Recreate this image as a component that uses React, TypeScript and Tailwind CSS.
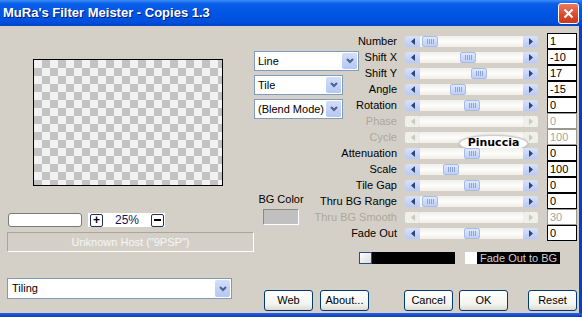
import React from "react";

type Row = { label: string; row: string; thumb?: number; value: string; disabled?: boolean };

const rows: Row[] = [
  { label: "Number", row: "row-start-1", thumb: 2, value: "1" },
  { label: "Shift X", row: "row-start-2", thumb: 40, value: "-10" },
  { label: "Shift Y", row: "row-start-3", thumb: 51, value: "17" },
  { label: "Angle", row: "row-start-4", thumb: 30, value: "-15" },
  { label: "Rotation", row: "row-start-5", thumb: 44, value: "0" },
  { label: "Phase", row: "row-start-6", value: "0", disabled: true },
  { label: "Cycle", row: "row-start-7", value: "100", disabled: true },
  { label: "Attenuation", row: "row-start-8", thumb: 44, value: "0" },
  { label: "Scale", row: "row-start-9", thumb: 23, value: "100" },
  { label: "Tile Gap", row: "row-start-10", thumb: 44, value: "0" },
  { label: "Thru BG Range", row: "row-start-11", thumb: 2, value: "0" },
  { label: "Thru BG Smooth", row: "row-start-12", value: "30", disabled: true },
  { label: "Fade Out", row: "row-start-13", thumb: 44, value: "0" },
];

const Arrow = ({ dir, disabled }: { dir: "l" | "r"; disabled?: boolean }) => (
  <div
    className={`w-[15px] h-[11px] rounded-[2px] flex items-center justify-center shrink-0 ${
      disabled ? "bg-[#f0efe9]" : "bg-[linear-gradient(to_bottom,#d7e2fc,#b7cbf6)]"
    }`}
  >
    <svg width="6" height="7" viewBox="0 0 6 7">
      <path d={dir === "l" ? "M5 0 L1 3.5 L5 7 Z" : "M1 0 L5 3.5 L1 7 Z"} fill={disabled ? "#cbc9bd" : "#2f4377"} />
    </svg>
  </div>
);

const Slider = ({ thumb, disabled }: { thumb?: number; disabled?: boolean }) => (
  <div className="w-[133px] h-[11px] flex">
    <Arrow dir="l" disabled={disabled} />
    <div className="flex-1 relative bg-[linear-gradient(to_bottom,#f1f0eb,#fdfdfb_50%,#efeee7)]">
      {thumb !== undefined && (
        <div
          className="absolute top-0 h-[11px] w-[16px] rounded-[2px] border border-[#a6bbea] bg-[linear-gradient(to_bottom,#dfe8fd,#bdd0f8)] flex items-center justify-center gap-[1px]"
          style={{ left: thumb }}
        >
          <span className="w-[1px] h-[5px] bg-[#8aa3de]" />
          <span className="w-[1px] h-[5px] bg-[#8aa3de]" />
          <span className="w-[1px] h-[5px] bg-[#8aa3de]" />
          <span className="w-[1px] h-[5px] bg-[#8aa3de]" />
        </div>
      )}
    </div>
    <Arrow dir="r" disabled={disabled} />
  </div>
);

const Chevron = () => (
  <svg width="8" height="6" viewBox="0 0 8 6">
    <path d="M1 1 L4 4 L7 1" stroke="#4d6185" strokeWidth="2" fill="none" />
  </svg>
);

const Select = ({ text, w }: { text: string; w: string }) => (
  <div className={`${w} h-[20px] bg-white border border-[#7f9db9] flex items-center`}>
    <span className="flex-1 pl-[3px] text-[11px] text-black whitespace-nowrap">{text}</span>
    <div className="w-[15px] h-[16px] mr-[1px] rounded-[2px] bg-[linear-gradient(to_bottom,#d3defb,#b3c7f5)] flex items-center justify-center">
      <Chevron />
    </div>
  </div>
);

const XpButton = ({ title }: { title: string }) => (
  <button className="w-[49px] h-[21px] rounded-[3px] border border-[#003c74] bg-[linear-gradient(to_bottom,#ffffff,#f3f3ef_70%,#dcdad0)] text-[11px] text-black flex items-center justify-center">
    {title}
  </button>
);

export default function App() {
  return (
    <div className="w-[582px] h-[317px] flex flex-col bg-[#d4d0c8] font-['Liberation_Sans',Arial,sans-serif] overflow-hidden">
      {/* title bar */}
      <div className="h-[26px] flex items-center justify-between pl-[3px] pr-[3px] bg-[linear-gradient(to_bottom,#3d8ef6_0%,#0a5ee9_14%,#0055e4_50%,#0050dc_85%,#0042c8_100%)]">
        <span className="text-white text-[13px] font-bold [text-shadow:1px_1px_#0a1a7a]">
          MuRa's Filter Meister - Copies 1.3
        </span>
        <button className="w-[21px] h-[21px] rounded-[3px] border border-white bg-[linear-gradient(to_bottom,#ea7b5c,#d9472b_60%,#c63a1f)] flex items-center justify-center">
          <svg width="11" height="11" viewBox="0 0 11 11">
            <path d="M1.5 1.5 L9.5 9.5 M9.5 1.5 L1.5 9.5" stroke="white" strokeWidth="2.2" />
          </svg>
        </button>
      </div>

      {/* body */}
      <div className="flex h-[287px] border-r-[3px] border-[#0a3fc4]">
        {/* left column */}
        <div className="w-[254px] flex flex-col">
          <div className="ml-[33px] mt-[33px] w-[190px] h-[127px] border border-black bg-[conic-gradient(#c3c3c3_25%,#f2f2f2_0_50%,#c3c3c3_0_75%,#f2f2f2_0)] bg-[length:16px_16px]" />
          <div className="mt-[27px] h-[14px] flex items-center">
            <div className="ml-[8px] w-[74px] h-[14px] bg-white border border-[#7a7a7a] rounded-[3px]" />
            <div className="ml-[6px] w-[77px] h-[14px] bg-white flex items-center">
              <div className="ml-[2px] w-[13px] h-[13px] rounded-[2px] border border-[#1c3560] flex items-center justify-center text-[12px] font-bold leading-none text-black">
                +
              </div>
              <span className="flex-1 text-center text-[12px] text-[#14145a]">25%</span>
              <div className="mr-[1px] w-[13px] h-[13px] rounded-[2px] border border-[#1c3560] flex items-center justify-center">
                <span className="w-[7px] h-[1.5px] bg-black" />
              </div>
            </div>
          </div>
          <div className="mt-[5px] ml-[7px] w-[247px] h-[20px] border border-[#aaa69a] border-r-white border-b-white flex items-center justify-center text-[11px] text-[#f6f6f4]">
            Unknown Host ("9PSP")
          </div>
          <div className="mt-[26px] ml-[7px] w-[225px] h-[21px] bg-white border border-[#7f9db9] flex items-center">
            <span className="flex-1 pl-[4px] text-[11px] text-black">Tiling</span>
            <div className="w-[15px] h-[17px] mr-[1px] rounded-[2px] bg-[linear-gradient(to_bottom,#d3defb,#b3c7f5)] flex items-center justify-center">
              <Chevron />
            </div>
          </div>
        </div>

        {/* right column */}
        <div className="flex-1 flex flex-col pt-[7px]">
          <div className="grid grid-cols-[105px_46px_142px_30px] auto-rows-[16px]">
            <div className="col-start-1 row-start-2 row-span-5 pt-[2px] flex flex-col gap-[4px]">
              <Select text="Line" w="w-[105px]" />
              <Select text="Tile" w="w-[89px]" />
              <Select text="(Blend Mode)" w="w-[89px]" />
            </div>
            <div className="col-start-1 row-start-11 row-span-2 pl-[6px]">
              <div className="w-[42px] flex flex-col items-center">
                <span className="text-[11px] leading-[13px] text-black whitespace-nowrap">BG Color</span>
                <div className="mt-[3px] w-[36px] h-[16px] bg-[#c0c0c0] border border-[#8d8a82] border-r-white border-b-white" />
              </div>
            </div>
            {rows.map((r) => (
              <React.Fragment key={r.label}>
                <div
                  className={`col-start-2 ${r.row} flex items-center justify-end pr-[8px] whitespace-nowrap text-[11px] ${
                    r.disabled ? "text-[#aca899]" : "text-black"
                  }`}
                >
                  {r.label}
                </div>
                <div className={`col-start-3 ${r.row} flex items-center relative`}>
                  <Slider thumb={r.thumb} disabled={r.disabled} />
                  {r.label === "Cycle" && (
                    <div className="absolute left-[54px] top-[6px] w-[69px] h-[17px] rounded-[50%] bg-white border border-[#d0d0d0] shadow-[0_0_2px_#999] flex items-center justify-center">
                      <span className="text-[11px] font-bold text-black font-['DejaVu_Sans',sans-serif]">Pinuccia</span>
                    </div>
                  )}
                </div>
                <div
                  className={`col-start-4 ${r.row} h-[16px] bg-white border ${
                    r.disabled ? "border-[#9a988e] text-[#a7a59b]" : "border-black text-black"
                  } text-[11px] leading-[14px] pl-[2px]`}
                >
                  {r.value}
                </div>
              </React.Fragment>
            ))}
          </div>

          {/* fade out colour row */}
          <div className="mt-[11px] h-[12px] flex items-center">
            <div className="ml-[105px] w-[96px] h-[12px] bg-black flex">
              <div className="w-[13px] h-[12px] bg-[linear-gradient(to_bottom_right,#ffffff,#dcdcdc)] border border-[#1f4f8f]" />
            </div>
            <div className="ml-[10px] w-[12px] h-[12px] bg-white" />
            <div className="h-[12px] bg-black px-[3px] flex items-center text-[11px] text-[#cfcfcf] whitespace-nowrap">
              Fade Out to BG
            </div>
          </div>

          {/* buttons */}
          <div className="mt-[26px] flex pl-[10px]">
            <XpButton title="Web" />
            <div className="ml-[7px]">
              <XpButton title="About..." />
            </div>
            <div className="ml-[35px]">
              <XpButton title="Cancel" />
            </div>
            <div className="ml-[6px]">
              <XpButton title="OK" />
            </div>
            <div className="ml-[20px]">
              <XpButton title="Reset" />
            </div>
          </div>
        </div>
      </div>

      {/* bottom frame */}
      <div className="h-[4px] bg-[linear-gradient(to_bottom,#2a62e0,#0a3cc0)]" />
    </div>
  );
}
